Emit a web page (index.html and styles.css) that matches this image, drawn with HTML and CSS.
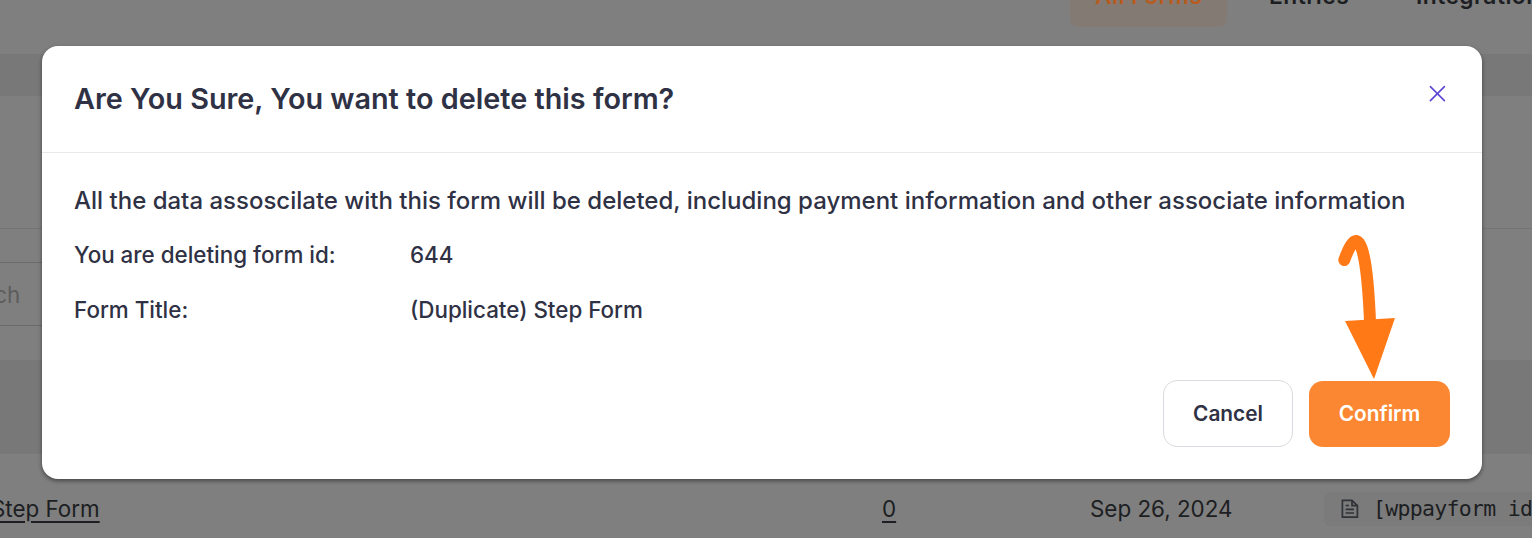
FILE: index.html
```html
<!DOCTYPE html>
<html lang="en">
<head>
<meta charset="utf-8">
<title>Delete form</title>
<link rel="stylesheet" href="styles.css">
</head>
<body>
<div class="page">
  <nav class="nav"><a class="tab active">All Forms</a><a class="tab entries">Entries</a><a class="tab">Integrations</a></nav>
  <div class="band"></div>
  <div class="heading"></div>
  <div class="filters"><div class="search">Search</div></div>
  <div class="thead"></div>
  <div class="row">
    <div class="name"><a>Step Form</a></div>
    <div class="count"><a>0</a></div>
    <div class="date">Sep 26, 2024</div>
    <div class="code">
      <svg width="18" height="20" viewBox="0 0 18 20" fill="none" stroke="#303337" stroke-width="1.7"><path d="M1.4 1.4H11L16.4 6.6V18.2H1.4Z M11 1.4V6.6H16.4 M4.6 6.5H8 M4.6 10.3H13 M4.6 14H13"/></svg>
      <code>[wppayform id="644"]</code>
    </div>
  </div>
</div>
<div class="dialog">
  <header class="head">
    <h1>Are You Sure, You want to delete this form?</h1>
    <svg class="close" width="18" height="18" viewBox="0 0 18 18" stroke="#5b45d6" stroke-width="1.6" stroke-linecap="round"><path d="M2.4 1.6L16.4 15.6M16.4 1.6L2.4 15.6"/></svg>
  </header>
  <div class="body">
    <p class="warning">All the data assoscilate with this form will be deleted, including payment information and other associate information</p>
    <dl class="details">
      <dt>You are deleting form id:</dt><dd>644</dd>
      <dt>Form Title:</dt><dd>(Duplicate) Step Form</dd>
    </dl>
  </div>
  <footer class="actions">
    <button class="btn cancel">Cancel</button>
    <button class="btn confirm">Confirm</button>
  </footer>
  <svg class="arrow" width="70" height="150" viewBox="1330 230 70 150"><path d="M1344.3 260C1349 247 1353 240.500 1356.500 241C1364 243 1368 275 1370 321" fill="none" stroke="#ff7917" stroke-width="12" stroke-linecap="round"/><path d="M1345 321L1395 318L1374 379Z" fill="#ff7917"/></svg>
</div>
</body>
</html>
```
FILE: styles.css
```css
* { box-sizing: border-box; }
body { margin: 0; width: 1532px; height: 538px; overflow: hidden; background: #7f7f7f; font-family: Inter, "Liberation Sans", sans-serif; color: #1c1e22; }
.page { width: 1532px; height: 538px; overflow: hidden; display: flex; flex-direction: column; }
.nav { height: 54px; flex: none; display: flex; align-items: flex-start; padding-left: 1070px; font-size: 22.8px; font-weight: 600; white-space: nowrap; }
.tab { flex: none; height: 35px; margin-top: -8px; line-height: 8px; padding: 0 24px; letter-spacing: .45px; }
.active { width: 157px; padding-left: 25px; background: #837a74; color: #b85b1c; border-radius: 0 0 8px 8px; }
.entries { width: 165px; padding-left: 42px; }
.band { height: 42px; flex: none; background: #787878; }
.heading { height: 133px; flex: none; border-bottom: 1px solid #747474; }
.filters { height: 131px; flex: none; padding-top: 33px; }
.search { width: 400px; height: 64px; margin-left: -64px; padding-left: 9px; border: 1px solid #6b6b6b; line-height: 63px; font-size: 22.4px; color: #5d5d5d; }
.thead { height: 94px; flex: none; background: #787878; }
.row { height: 84px; flex: none; display: grid; grid-template-columns: 882px 208px 234px 300px; font-size: 22.4px; letter-spacing: 0; line-height: 34px; padding-top: 38px; white-space: nowrap; }
.row a { text-decoration: underline; text-decoration-thickness: 2px; text-underline-offset: 4px; }
.name { margin-left: -9px; }
.code { height: 34px; display: flex; align-items: center; gap: 14px; padding-left: 17px; background: #7b7b7b; border-radius: 6px; }
.code svg { flex: none; }
.code code { font-family: "DejaVu Sans Mono", monospace; font-size: 21.5px; letter-spacing: -.7px; }
.dialog { position: absolute; left: 42px; top: 46px; width: 1440px; height: 433px; background: #fff; border-radius: 16px; box-shadow: 0 2px 4px rgba(0,0,0,.45); color: #2f3144; display: flex; flex-direction: column; }
.head { height: 107px; border-bottom: 1px solid #e8e8ea; display: flex; justify-content: space-between; padding: 34px 36px 0 32px; }
h1 { margin: 0; font-size: 28.8px; line-height: 38px; font-weight: 600; white-space: nowrap; }
.close { margin-top: 5px; }
.body { padding: 31px 32px 0; height: 227px; font-weight: 500; white-space: nowrap; }
.warning { margin: 0; font-size: 24px; line-height: 34px; }
.details { margin: 9px 0 0; display: grid; grid-template-columns: 336px 1fr; font-size: 22.4px; line-height: 55px; }
.details dd { margin: 0; }
.actions { display: flex; justify-content: flex-end; gap: 16px; padding-right: 32px; }
.btn { height: 67px; border-radius: 14px; font: 600 20.8px/65px Inter, sans-serif; padding: 0; }
.cancel { width: 130px; border: 1px solid #dadbe0; background: #fff; color: #2f3144; }
.confirm { width: 141px; height: 66px; margin-top: 1px; padding-bottom: 1px; border: 0; background: #fb8733; color: #fff; line-height: 64px; }
.arrow { position: absolute; left: 1288px; top: 184px; }
```
